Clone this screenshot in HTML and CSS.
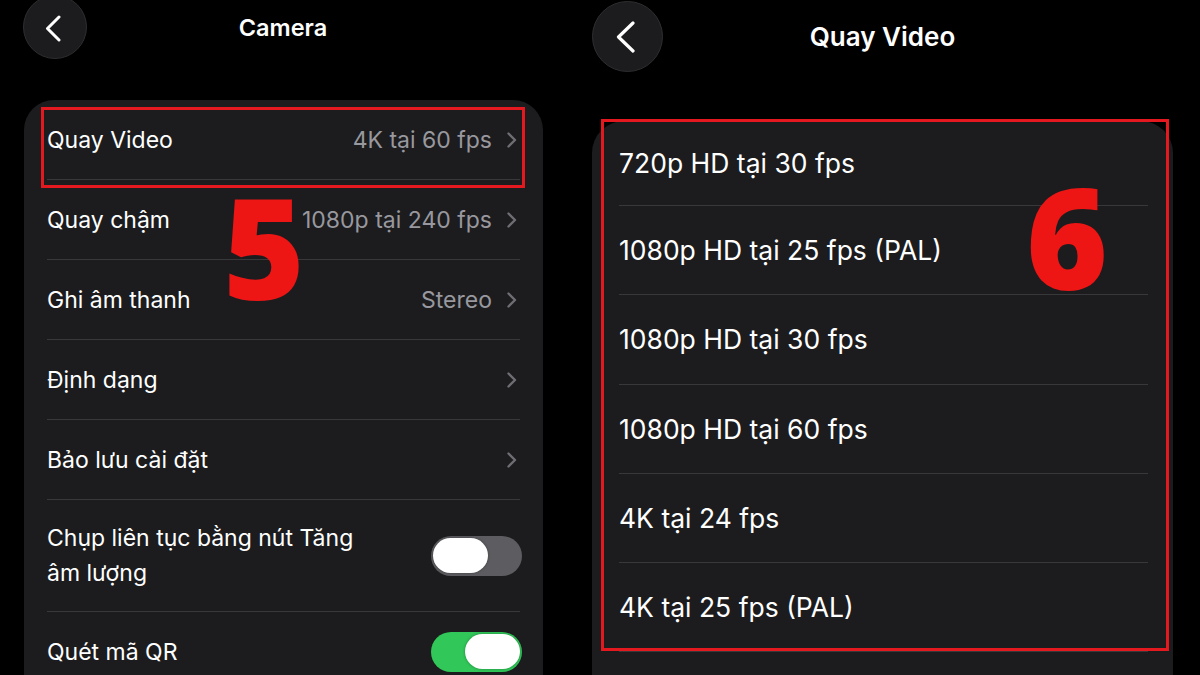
FILE: index.html
```html
<!DOCTYPE html>
<html lang="vi">
<head>
<meta charset="utf-8">
<title>Camera - Quay Video</title>
<link rel="stylesheet" href="styles.css">
</head>
<body>
<div class="page">
  <section class="screen s1">
    <header class="nav">
      <div class="back">
        <svg width="16" height="27" viewBox="0 0 16 27"><polyline points="14,2 2.5,13.5 14,25" fill="none" stroke="#fff" stroke-width="3" stroke-linecap="round" stroke-linejoin="round"/></svg>
      </div>
      <div class="title">Camera</div>
      <div></div>
    </header>
    <div class="card">
      <div class="row"><span class="label">Quay Video</span><span class="value">4K tại 60 fps</span><svg class="chev" width="10" height="16" viewBox="0 0 10 16"><polyline points="1.5,1.5 8,8 1.5,14.5" fill="none" stroke="#6e6e73" stroke-width="2.4" stroke-linecap="round" stroke-linejoin="round"/></svg></div>
      <div class="row"><span class="label">Quay chậm</span><span class="value">1080p tại 240 fps</span><svg class="chev" width="10" height="16" viewBox="0 0 10 16"><polyline points="1.5,1.5 8,8 1.5,14.5" fill="none" stroke="#6e6e73" stroke-width="2.4" stroke-linecap="round" stroke-linejoin="round"/></svg></div>
      <div class="row"><span class="label">Ghi âm thanh</span><span class="value">Stereo</span><svg class="chev" width="10" height="16" viewBox="0 0 10 16"><polyline points="1.5,1.5 8,8 1.5,14.5" fill="none" stroke="#6e6e73" stroke-width="2.4" stroke-linecap="round" stroke-linejoin="round"/></svg></div>
      <div class="row"><span class="label">Định dạng</span><span class="value"></span><svg class="chev" width="10" height="16" viewBox="0 0 10 16"><polyline points="1.5,1.5 8,8 1.5,14.5" fill="none" stroke="#6e6e73" stroke-width="2.4" stroke-linecap="round" stroke-linejoin="round"/></svg></div>
      <div class="row"><span class="label">Bảo lưu cài đặt</span><span class="value"></span><svg class="chev" width="10" height="16" viewBox="0 0 10 16"><polyline points="1.5,1.5 8,8 1.5,14.5" fill="none" stroke="#6e6e73" stroke-width="2.4" stroke-linecap="round" stroke-linejoin="round"/></svg></div>
      <div class="row tall"><span class="label wrap">Chụp liên tục bằng nút Tăng âm lượng</span><span class="toggle off"><span class="knob"></span></span></div>
      <div class="row"><span class="label">Quét mã QR</span><span class="toggle on"><span class="knob"></span></span></div>
    </div>
    <div class="hl hl1"></div>
    <div class="num num5">5</div>
  </section>

  <section class="screen s2">
    <header class="nav">
      <div class="back">
        <svg width="19" height="32" viewBox="0 0 19 32"><polyline points="17,2 2.5,16 17,30" fill="none" stroke="#fff" stroke-width="3.2" stroke-linecap="round" stroke-linejoin="round"/></svg>
      </div>
      <div class="title">Quay Video</div>
      <div></div>
    </header>
    <div class="card">
      <div class="row"><span class="label">720p HD tại 30 fps</span></div>
      <div class="row"><span class="label">1080p HD tại 25 fps (PAL)</span></div>
      <div class="row"><span class="label">1080p HD tại 30 fps</span></div>
      <div class="row"><span class="label">1080p HD tại 60 fps</span></div>
      <div class="row"><span class="label">4K tại 24 fps</span></div>
      <div class="row"><span class="label">4K tại 25 fps (PAL)</span></div>
    </div>
    <div class="hl hl2"></div>
    <div class="num num6">6</div>
  </section>
</div>
</body>
</html>
```
FILE: styles.css
```css
* { box-sizing: border-box; }
html, body {
  margin: 0;
  padding: 0;
  background: #000;
}
body {
  width: 1200px;
  height: 675px;
  overflow: hidden;
  font-family: Inter, "Noto Sans", "Liberation Sans", sans-serif;
  color: #fff;
}
.page {
  display: flex;
  align-items: flex-start;
  height: 675px;
  overflow: hidden;
}
.screen {
  position: relative;
  flex: none;
}
.s1 {
  width: 567px;
  padding: 0 24px 0 23px;
}
.s2 {
  width: 581px;
  margin-left: 25px;
}

/* nav */
.nav {
  display: grid;
  align-items: center;
}
.s1 .nav {
  grid-template-columns: 64px 1fr 64px;
  height: 64px;
  margin-top: -5px;
}
.s2 .nav {
  grid-template-columns: 71px 1fr 71px;
  height: 71px;
  margin-top: 1px;
}
.back {
  border-radius: 50%;
  background: #1c1c1e;
  border: 1px solid #2e2e31;
  display: flex;
  align-items: center;
  justify-content: center;
}
.s1 .back { width: 64px; height: 64px; padding-right: 4px; padding-top: 3px; }
.s2 .back { width: 71px; height: 71px; padding-right: 5px; }
.title {
  text-align: center;
  font-weight: 600;
}
.s1 .title { font-size: 23.5px; padding-top: 1px; }
.s2 .title { font-size: 26px; }

/* card */
.card {
  background: #1c1c1e;
  border-radius: 30px 30px 0 0;
}
.s1 .card {
  margin-top: 41px;
  margin-left: 1px;
  padding-left: 23px;
  padding-right: 23px;
  height: 620px;
}
.s2 .card {
  margin-top: 49px;
  padding-left: 27px;
  padding-right: 25px;
  border-radius: 32px 32px 0 0;
  height: 620px;
}
.row {
  display: flex;
  align-items: center;
  border-bottom: 1px solid #38383b;
}
.s1 .row {
  height: 80px;
  font-size: 23px;
}
.s1 .row.tall {
  height: 112px;
}
.s2 .row {
  height: 89.3px;
  font-size: 26.5px;
}
.s2 .row:first-child {
  height: 85px;
}
.label {
  flex: 1;
  white-space: nowrap;
}
.label.wrap {
  white-space: normal;
  line-height: 35px;
  max-width: 330px;
}
.value {
  color: #98989e;
  margin-right: 15px;
  white-space: nowrap;
}
.chev {
  flex: none;
  margin-right: 3px;
}

/* toggles */
.toggle {
  flex: none;
  width: 91px;
  height: 40px;
  border-radius: 20px;
  display: flex;
  align-items: center;
  padding: 0 2px;
  margin-left: auto;
  margin-right: -2px;
}
.toggle.off { background: #5d5d61; }
.toggle.on { background: #31c759; justify-content: flex-end; }
.knob {
  width: 55px;
  height: 35px;
  border-radius: 18px;
  background: #fff;
  box-shadow: 0 0 3px rgba(0,0,0,0.35);
}

/* highlights */
.hl {
  position: absolute;
  border: 3px solid #e3191f;
}
.hl1 {
  left: 41px;
  top: 107px;
  width: 484px;
  height: 81px;
}
.hl2 {
  left: 9px;
  top: 119px;
  width: 568px;
  height: 532px;
}
.num {
  position: absolute;
  font-family: "Open Sans", "DejaVu Sans", sans-serif;
  font-weight: 800;
  font-size: 140px;
  line-height: 140px;
  color: #ee1515;
}
.num5 {
  left: 223px;
  top: 176px;
}
.num6 {
  left: 434px;
  top: 166px;
}
```
